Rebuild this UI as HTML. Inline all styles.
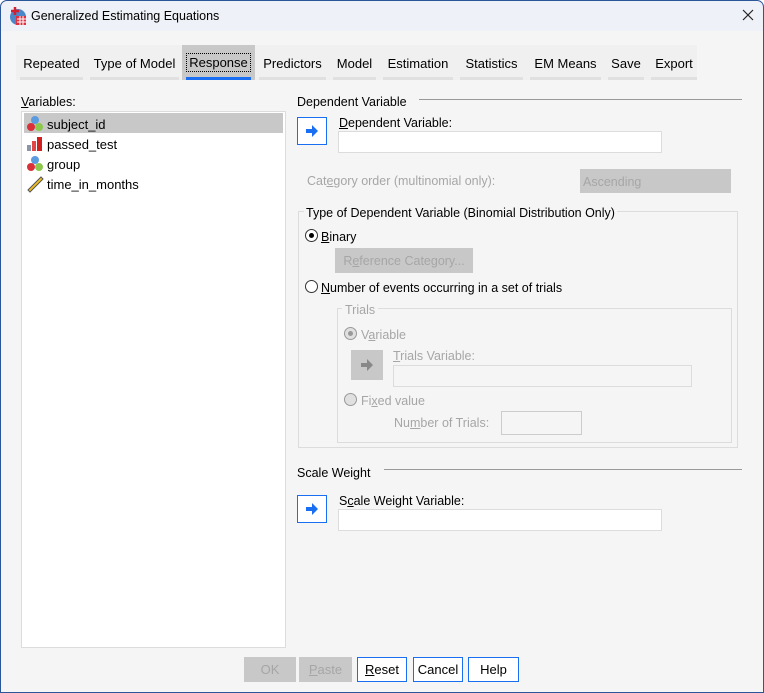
<!DOCTYPE html>
<html><head><style>
*{box-sizing:border-box;margin:0;padding:0}
body{width:764px;height:693px;overflow:hidden;background:#fff;font-family:"Liberation Sans",Arial,sans-serif;font-size:12.5px;color:#000}
#win{position:absolute;left:0;top:0;width:764px;height:693px;background:#f5f5f5;overflow:hidden;border-radius:7px 7px 0 0}
#frame{position:absolute;left:0;top:0;width:764px;height:693px;border:1px solid #2b579a;border-radius:7px 7px 0 0;pointer-events:none}
#title{position:absolute;left:0;top:0;width:764px;height:31px;background:#eef1f8}
.a{position:absolute;white-space:nowrap}
.t{transform:translateY(1px)}
.tab{position:absolute;top:46px;height:34px;background:#f0f0f0;border-bottom:3px solid #e0e0e0;text-align:center;line-height:36px;font-size:13px}
.dis{color:#a6a6a6}
.box{position:absolute;background:#fff;border:1px solid #dcdcdc}
.arrow{position:absolute;width:30px;height:28px;border:1px solid #1a6ef2;background:#fff}
.btn{position:absolute;top:657px;height:25px;font-size:13px;text-align:center;line-height:24px}
.radio{position:absolute;width:13px;height:13px;border:1px solid #333;border-radius:50%;background:#fff}
u{text-decoration:underline}
</style></head><body>
<div id="win">
<div id="title"></div>
<svg class="a" style="left:8px;top:6px" width="20" height="20" viewBox="0 0 20 20"><circle cx="10" cy="11" r="8" fill="#4a86c8"/><rect x="8" y="10" width="10" height="9" fill="#e03040"/><path d="M9 13h9M9 16h9M12 10v9M15 10v9" stroke="#fff" stroke-width="1"/><path d="M3 5h8M7 1v8" stroke="#d02030" stroke-width="2.5"/></svg>
<div class="a" style="left:31px;top:9px;font-size:12.5px">Generalized Estimating Equations</div>
<svg class="a" style="left:742px;top:9px" width="12" height="12"><path d="M1 1L11 11M11 1L1 11" stroke="#222" stroke-width="1.2"/></svg>

<div class="a" style="left:16px;top:45px;width:681px;height:35px;background:#f0f0f0"></div>
<div class="tab" style="left:20px;width:63px">Repeated</div>
<div class="tab" style="left:90px;width:89px">Type of Model</div>
<div class="tab" style="left:182px;width:73px;top:45px;background:#c8c8c8;border-bottom:none;height:35px;line-height:35px"><span style="border:1px dotted #000;padding:1px 2px">Response</span><div style="position:absolute;left:4px;right:4px;bottom:0;height:3px;background:#1a6ef2"></div></div>
<div class="tab" style="left:259px;width:67px">Predictors</div>
<div class="tab" style="left:333px;width:43px">Model</div>
<div class="tab" style="left:383px;width:70px">Estimation</div>
<div class="tab" style="left:460px;width:63px">Statistics</div>
<div class="tab" style="left:530px;width:71px">EM Means</div>
<div class="tab" style="left:608px;width:36px">Save</div>
<div class="tab" style="left:651px;width:46px">Export</div>

<div class="a t" style="left:21px;top:94px"><u>V</u>ariables:</div>
<div class="box" style="left:21px;top:111px;width:265px;height:537px"></div>
<div class="a" style="left:24px;top:113px;width:259px;height:20px;background:#c8c8c8"></div>
<svg class="a" style="left:26px;top:115px" width="18" height="18"><circle cx="9" cy="5" r="4" fill="#5b9bdf"/><circle cx="5" cy="12" r="4" fill="#d9303a"/><circle cx="13" cy="12" r="4" fill="#8cc84b"/></svg>
<div class="a t" style="left:47px;top:116px;font-size:13px">subject_id</div>
<svg class="a" style="left:26px;top:135px" width="18" height="18"><rect x="1" y="10" width="4" height="6" fill="#8a96a8"/><rect x="6" y="6" width="4" height="10" fill="#e04848"/><rect x="11" y="2" width="5" height="14" fill="#d02020"/></svg>
<div class="a t" style="left:47px;top:136px;font-size:13px">passed_test</div>
<svg class="a" style="left:26px;top:155px" width="18" height="18"><circle cx="9" cy="5" r="4" fill="#5b9bdf"/><circle cx="5" cy="12" r="4" fill="#d9303a"/><circle cx="13" cy="12" r="4" fill="#8cc84b"/></svg>
<div class="a t" style="left:47px;top:156px;font-size:13px">group</div>
<svg class="a" style="left:26px;top:175px" width="18" height="18"><path d="M2 15L15 2L17 4L4 17Z" fill="#f0c020" stroke="#555" stroke-width="1"/></svg>
<div class="a t" style="left:47px;top:176px;font-size:13px">time_in_months</div>

<div class="a t" style="left:297px;top:94px">Dependent Variable</div>
<div class="a" style="left:419px;top:99px;width:323px;height:1px;background:#999"></div>
<div class="arrow" style="left:297px;top:117px"><svg width="28" height="26"><path d="M8 11h6v-4l6 6-6 6v-4h-6z" fill="#1a6ef2"/></svg></div>
<div class="a t" style="left:339px;top:115px"><u>D</u>ependent Variable:</div>
<div class="box" style="left:338px;top:131px;width:324px;height:22px"></div>
<div class="a dis t" style="left:307px;top:173px">Cat<u>e</u>gory order (multinomial only):</div>
<div class="a dis" style="left:580px;top:169px;width:151px;height:24px;background:#c8c8c8;padding:6px 3px">Ascending</div>

<div class="a" style="left:298px;top:211px;width:440px;height:237px;border:1px solid #dcdcdc"></div>
<div class="a t" style="left:304px;top:205px;background:#f5f5f5;padding:0 2px">Type of Dependent Variable (Binomial Distribution Only)</div>
<div class="radio" style="left:305px;top:229px"><div style="position:absolute;left:3px;top:3px;width:5px;height:5px;border-radius:50%;background:#000"></div></div>
<div class="a t" style="left:321px;top:229px"><u>B</u>inary</div>
<div class="a dis" style="left:335px;top:248px;width:138px;height:25px;background:#c8c8c8;text-align:center;line-height:27px">R<u>e</u>ference Category...</div>
<div class="radio" style="left:305px;top:280px"></div>
<div class="a t" style="left:321px;top:280px"><u>N</u>umber of events occurring in a set of trials</div>

<div class="a" style="left:337px;top:308px;width:395px;height:135px;border:1px solid #dcdcdc"></div>
<div class="a dis t" style="left:342px;top:302px;background:#f5f5f5;padding:0 3px">Trials</div>
<div class="radio" style="left:344px;top:327px;border-color:#999;background:#e0e0e0"><div style="position:absolute;left:3px;top:3px;width:5px;height:5px;border-radius:50%;background:#999"></div></div>
<div class="a dis t" style="left:361px;top:327px">V<u>a</u>riable</div>
<div class="a" style="left:351px;top:350px;width:32px;height:30px;background:#c8c8c8"><svg width="32" height="30"><path d="M10 13h6v-4l6 6-6 6v-4h-6z" fill="#888"/></svg></div>
<div class="a dis t" style="left:393px;top:348px"><u>T</u>rials Variable:</div>
<div class="box" style="left:393px;top:365px;width:299px;height:22px;border-color:#dcdcdc;background:#f5f5f5"></div>
<div class="radio" style="left:344px;top:393px;border-color:#999;background:#e0e0e0"></div>
<div class="a dis t" style="left:361px;top:393px">Fi<u>x</u>ed value</div>
<div class="a dis t" style="left:394px;top:415px">Nu<u>m</u>ber of Trials:</div>
<div class="a" style="left:501px;top:411px;width:81px;height:24px;border:1px solid #ccc"></div>

<div class="a t" style="left:297px;top:465px">Scale Weight</div>
<div class="a" style="left:384px;top:469px;width:358px;height:1px;background:#999"></div>
<div class="arrow" style="left:297px;top:495px"><svg width="28" height="26"><path d="M8 11h6v-4l6 6-6 6v-4h-6z" fill="#1a6ef2"/></svg></div>
<div class="a t" style="left:339px;top:493px">S<u>c</u>ale Weight Variable:</div>
<div class="box" style="left:338px;top:509px;width:324px;height:22px"></div>

<div class="btn dis" style="left:244px;width:52px;background:#c8c8c8;line-height:26px">OK</div>
<div class="btn dis" style="left:299px;width:53px;background:#c8c8c8;line-height:26px"><u>P</u>aste</div>
<div class="btn" style="left:357px;width:50px;border:1px solid #1a6ef2;background:#fff"><u>R</u>eset</div>
<div class="btn" style="left:413px;width:50px;border:1px solid #1a6ef2;background:#fff">Cancel</div>
<div class="btn" style="left:468px;width:51px;border:1px solid #1a6ef2;background:#fff">Help</div>
</div>
<div id="frame"></div>
</body></html>
